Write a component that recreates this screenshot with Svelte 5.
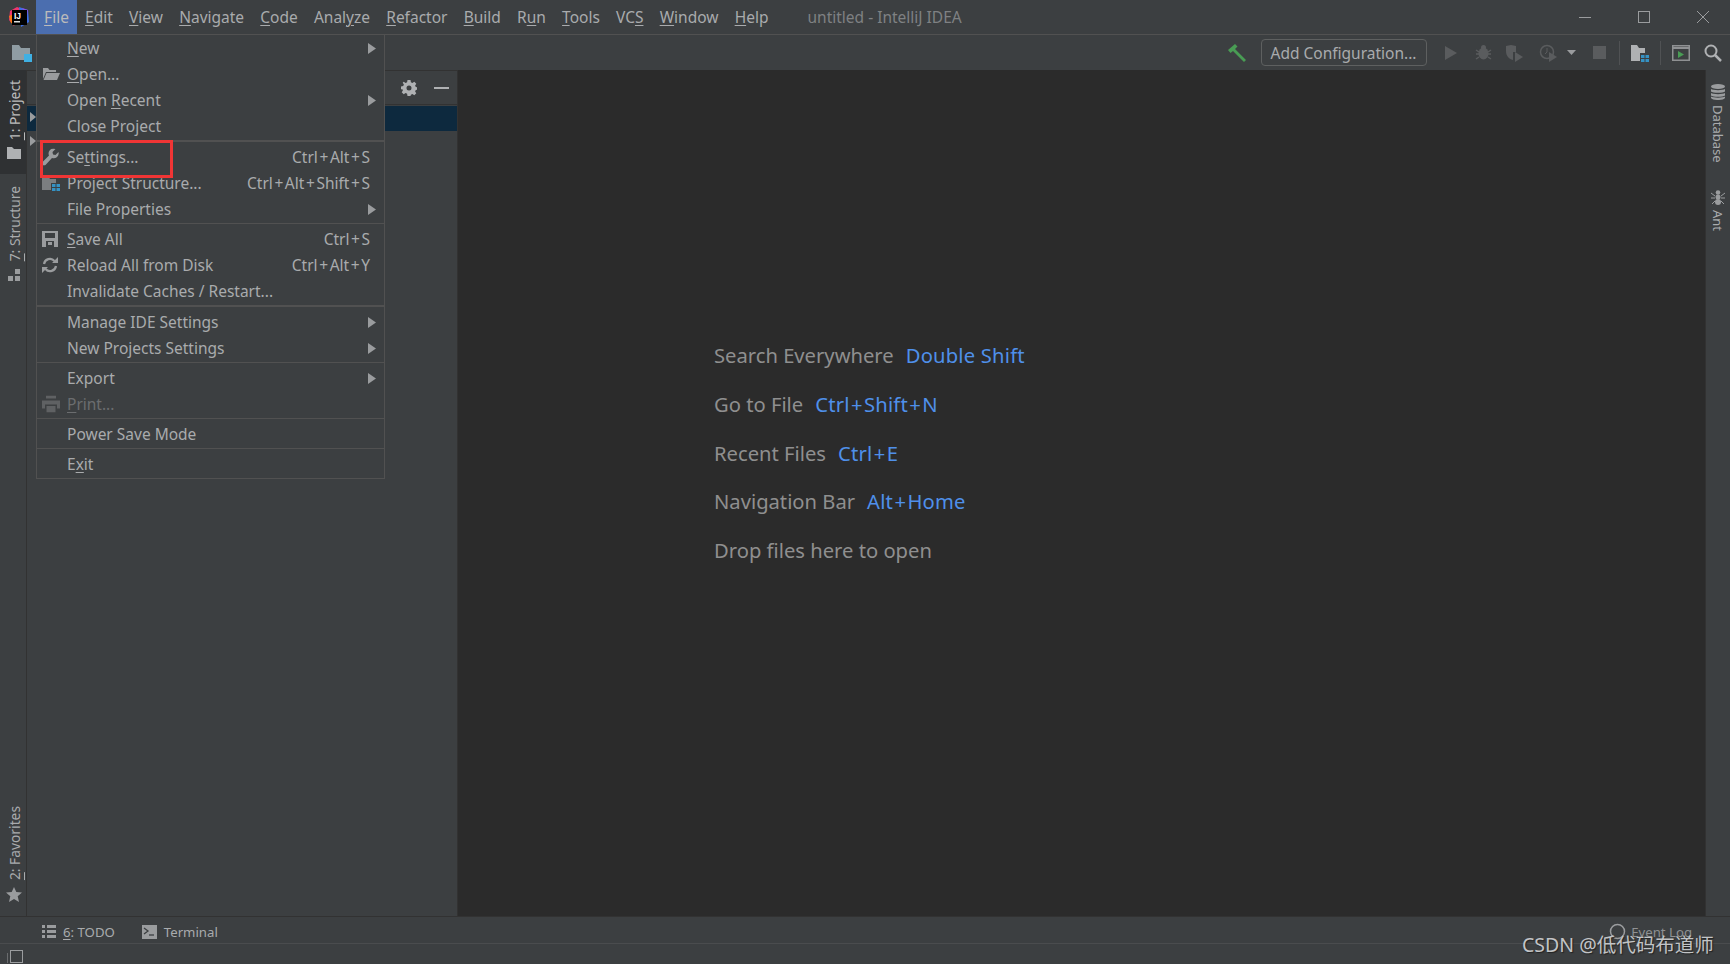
<script lang="ts">
  type Row = { label: string; key?: number; icon?: string; short?: string; sub?: boolean; off?: boolean }

  const bar = [
    ['File', 0], ['Edit', 0], ['View', 0], ['Navigate', 0], ['Code', 0], ['Analyze', 4],
    ['Refactor', 0], ['Build', 0], ['Run', 1], ['Tools', 0], ['VCS', 2], ['Window', 0], ['Help', 0],
  ] as [string, number][]

  const groups: Row[][] = [
    [
      { label: 'New', key: 0, sub: true },
      { label: 'Open...', key: 0, icon: 'open' },
      { label: 'Open Recent', key: 5, sub: true },
      { label: 'Close Project' },
    ],
    [
      { label: 'Settings...', key: 2, icon: 'wrench', short: 'Ctrl+Alt+S' },
      { label: 'Project Structure...', icon: 'structure', short: 'Ctrl+Alt+Shift+S' },
      { label: 'File Properties', sub: true },
    ],
    [
      { label: 'Save All', key: 0, icon: 'save', short: 'Ctrl+S' },
      { label: 'Reload All from Disk', icon: 'reload', short: 'Ctrl+Alt+Y' },
      { label: 'Invalidate Caches / Restart...' },
    ],
    [
      { label: 'Manage IDE Settings', sub: true },
      { label: 'New Projects Settings', sub: true },
    ],
    [
      { label: 'Export', sub: true },
      { label: 'Print...', key: 0, icon: 'print', off: true },
    ],
    [{ label: 'Power Save Mode' }],
    [{ label: 'Exit', key: 1 }],
  ]

  const hints = [
    ['Search Everywhere', 'Double Shift'],
    ['Go to File', 'Ctrl+Shift+N'],
    ['Recent Files', 'Ctrl+E'],
    ['Navigation Bar', 'Alt+Home'],
    ['Drop files here to open', ''],
  ]
</script>

{#snippet mn(text: string, key: number | undefined)}
  {#if key === undefined}{text}{:else}{text.slice(0, key)}<u>{text[key]}</u>{text.slice(key + 1)}{/if}
{/snippet}

{#snippet keys(text: string)}
  {#each text.split('+') as part, i}{#if i > 0}<span class="plus">+</span>{/if}{part}{/each}
{/snippet}

<div class="ide">
  <header class="titlebar">
    <svg class="logo" width="22" height="22" viewBox="0 0 22 22">
      <polygon points="2,5 9,1 14,3 6,20 1,14" fill="#f0366e" />
      <polygon points="1,10 6,8 8,18 3,17" fill="#f97a12" />
      <polygon points="11,1 20,4 21,16 13,21" fill="#3b6ee8" />
      <polygon points="14,2 20,4 19,10" fill="#8a4fe0" />
      <rect x="4" y="4" width="15" height="15" fill="#000" />
      <rect x="6" y="15" width="6" height="1.500" fill="#ddd" />
      <text x="6" y="12.500" class="logo-t">IJ</text>
    </svg>
    <nav class="menubar">
      {#each bar as [name, key], i}
        <span class="top" class:on={i === 0}>{@render mn(name, key)}</span>
      {/each}
    </nav>
    <span class="wintitle">untitled - IntelliJ IDEA</span>
    <div class="winctl">
      <svg width="14" height="14" viewBox="0 0 14 14"><path d="M1 7.500h12" stroke="#9a9c9e" /></svg>
      <svg width="14" height="14" viewBox="0 0 14 14"><rect x="1.500" y="1.500" width="11" height="11" fill="none" stroke="#9a9c9e" /></svg>
      <svg width="14" height="14" viewBox="0 0 14 14"><path d="M1 1l12 12M13 1L1 13" stroke="#9a9c9e" /></svg>
    </div>
  </header>

  <div class="toolbar">
    <svg class="tb-folder" width="22" height="20" viewBox="0 0 22 20">
      <path d="M0 2h7l2 3h9v12H0z" fill="#8f9ca3" />
      <rect x="12" y="11" width="8" height="8" fill="#3fb0e3" />
    </svg>
    <div class="tb-right">
      <svg class="hammer" width="20" height="20" viewBox="0 0 20 20">
        <path d="M1 7 8 1l2.500 2.500L8 6l11 11-2 2L6 8 3.500 10z" fill="#499c54" />
      </svg>
      <button class="config">Add Configuration...</button>
      <svg class="play" width="14" height="16" viewBox="0 0 14 16"><path d="M1 1l12 7-12 7z" fill="#5a5c5e" /></svg>
      <svg class="bug" width="17" height="17" viewBox="0 0 17 17">
        <ellipse cx="8.500" cy="9.500" rx="5" ry="6" fill="#5a5c5e" />
        <circle cx="8.500" cy="3.500" r="2.500" fill="#5a5c5e" />
        <path d="M1 6l3 2M16 6l-3 2M1 10h3M16 10h-3M1 15l3-2M16 15l-3-2" stroke="#5a5c5e" stroke-width="1.500" />
      </svg>
      <svg class="cov" width="20" height="18" viewBox="0 0 20 18">
        <path d="M1 2l5-1 5 1v6H8v8C4 15 1 12 1 7z" fill="#5a5c5e" />
        <path d="M10 8l8 5-8 5z" fill="#5a5c5e" />
      </svg>
      <span class="profile">
        <svg width="20" height="18" viewBox="0 0 20 18">
          <circle cx="8" cy="8" r="6.500" fill="none" stroke="#5a5c5e" stroke-width="1.500" />
          <path d="M8 4v4l-2 2" stroke="#5a5c5e" fill="none" />
          <path d="M10 8l8 5-8 5z" fill="#5a5c5e" />
        </svg>
        <svg width="9" height="6" viewBox="0 0 9 6"><path d="M0 0h9L4.500 5z" fill="#9a9c9e" /></svg>
      </span>
      <svg class="stop" width="13" height="13" viewBox="0 0 13 13"><rect width="13" height="13" fill="#5a5c5e" /></svg>
      <i class="vsep"></i>
      <svg width="18" height="18" viewBox="0 0 18 18">
        <path d="M0 1h6l2 3h6v5H9v8H0z" fill="#afb1b3" />
        <path d="M10 11h3.500v3H10zM14.500 11H18v3h-3.500zM10 15h3.500v3H10zM14.500 15H18v3h-3.500z" fill="#3592c4" />
      </svg>
      <i class="vsep"></i>
      <svg width="18" height="16" viewBox="0 0 18 16">
        <rect x=".75" y=".75" width="16.500" height="14.500" fill="none" stroke="#8f9193" stroke-width="1.500" />
        <path d="M1 3h16" stroke="#8f9193" stroke-width="2" />
        <path d="M6 6l6 3.500-6 3.500z" fill="#499c54" />
      </svg>
      <svg width="18" height="18" viewBox="0 0 18 18">
        <circle cx="7" cy="7" r="5.500" fill="none" stroke="#afb1b3" stroke-width="2" />
        <path d="M11 11l6 6" stroke="#afb1b3" stroke-width="2.500" />
      </svg>
    </div>
  </div>

  <div class="middle">
    <aside class="stripe left">
      <div class="side-top">
        <div class="tab active">
          <span class="vtext"><u>1</u>: Project</span>
          <svg width="14" height="12" viewBox="0 0 14 12"><path d="M0 0h5l2 2h7v10H0z" fill="#afb1b3" /></svg>
        </div>
        <div class="tab">
          <span class="vtext"><u>7</u>: Structure</span>
          <svg width="13" height="13" viewBox="0 0 13 13"><path d="M7 0h5v5H7zM0 7h5v5H0zM7 7h5v5H7z" fill="#9a9c9e" /></svg>
        </div>
      </div>
      <div class="tab fav">
        <span class="vtext"><u>2</u>: Favorites</span>
        <svg width="16" height="15" viewBox="0 0 16 15"><path d="M8 0l2.300 5 5.700.600-4.300 3.700L13 15 8 12l-5 3 1.300-5.700L0 5.600 5.700 5z" fill="#9a9c9e" /></svg>
      </div>
    </aside>

    <section class="panel">
      <div class="panel-head">
        <svg width="16" height="16" viewBox="0 0 16 16">
          <path fill-rule="evenodd" d="M6.500 0h3l.4 2.200 1.500.7L13.300 1.700l2 2-1.200 1.900.7 1.500L17 7.500v-1 3l-2.200.4-.7 1.500 1.200 1.900-2 2-1.900-1.200-1.500.7L9.500 16h-3l-.4-2.200-1.500-.7-1.900 1.200-2-2 1.200-1.900-.7-1.500L0 9.500v-3l2.200-.4.7-1.500L1.700 2.700l1-1 1.900 1.200 1.500-.7zM8 5.500a2.500 2.500 0 1 0 0 5 2.500 2.500 0 0 0 0-5z" fill="#afb1b3" />
        </svg>
        <span class="dash"></span>
      </div>
      <div class="selrow"></div>
    </section>

    <main class="editor">
      <div class="hints">
        {#each hints as [a, b]}
          <p>{a}{#if b}<b>{@render keys(b)}</b>{/if}</p>
        {/each}
      </div>
    </main>

    <aside class="stripe right">
      <div class="rtab">
        <svg width="14" height="16" viewBox="0 0 14 16">
          <ellipse cx="7" cy="2.500" rx="7" ry="2.500" fill="#9a9c9e" />
          <path d="M0 5c1.500 1.500 12.500 1.500 14 0v2.500c-1.500 1.800-12.500 1.800-14 0zM0 9c1.500 1.500 12.500 1.500 14 0v2.500c-1.500 1.800-12.500 1.800-14 0zM0 12.500c1.500 1.500 12.500 1.500 14 0V14c-1.500 2.700-12.500 2.700-14 0z" fill="#9a9c9e" />
        </svg>
        <span class="rtext">Database</span>
      </div>
      <div class="rtab">
        <svg width="14" height="15" viewBox="0 0 14 15">
          <circle cx="7" cy="2.500" r="2.300" fill="#9a9c9e" />
          <ellipse cx="7" cy="7" rx="2.500" ry="2.500" fill="#9a9c9e" />
          <ellipse cx="7" cy="12" rx="3" ry="3" fill="#9a9c9e" />
          <path d="M0 3l4 3M14 3l-4 3M0 8h4M14 8h-4M1 14l3-3M13 14l-3-3" stroke="#9a9c9e" />
        </svg>
        <span class="rtext">Ant</span>
      </div>
    </aside>
  </div>

  <div class="toolwin">
    <span class="tw">
      <svg width="14" height="13" viewBox="0 0 14 13"><path d="M0 0h3v3H0zM5 0h9v3H5zM0 5h3v3H0zM5 5h9v3H5zM0 10h3v3H0zM5 10h9v3H5z" fill="#9a9c9e" /></svg>
      <span><u>6</u>: TODO</span>
    </span>
    <span class="tw">
      <svg width="15" height="14" viewBox="0 0 15 14"><rect width="15" height="14" fill="#9a9c9e" /><path d="M2 3l4 3-4 3" stroke="#3c3f41" fill="none" stroke-width="1.300" /><path d="M7 10h5" stroke="#3c3f41" stroke-width="1.300" /></svg>
      <span>Terminal</span>
    </span>
    <span class="evlog">
      <svg width="17" height="17" viewBox="0 0 17 17"><circle cx="8.500" cy="8.500" r="7" fill="none" stroke="#9a9c9e" stroke-width="1.500" /></svg>
      <span>Event Log</span>
    </span>
  </div>

  <footer class="status">
    <svg width="16" height="14" viewBox="0 0 16 14">
      <rect x="3.500" y="1.500" width="12" height="12" fill="none" stroke="#9a9c9e" />
      <path d="M.5 4v10" stroke="#6a6c6e" />
    </svg>
  </footer>

  <div class="filemenu">
    {#each groups as rows, g}
      {#if g > 0}<hr class:thick={g === 1 || g === 3} />{/if}
      {#each rows as row}
        <div class="item" class:off={row.off}>
          <span class="ico">
            {#if row.icon === 'open'}
              <svg width="18" height="14" viewBox="0 0 18 14"><path d="M1 1h5l1.500 2H14v2H4L1 12z" fill="#9a9c9e" /><path d="M4.500 6H18l-3 7H1.500z" fill="#9a9c9e" /></svg>
            {:else if row.icon === 'wrench'}
              <svg width="17" height="17" viewBox="0 0 17 17"><path d="M11.500 0a5 5 0 0 1 2 .4L10.500 3.500l.5 2.500 2.500.5 3-3A5 5 0 0 1 10 9.500L3.500 16.500a1.500 1.500 0 0 1-3-3L7 7a5 5 0 0 1 4.500-7z" fill="#9a9c9e" /></svg>
            {:else if row.icon === 'structure'}
              <svg width="18" height="16" viewBox="0 0 18 16"><path d="M0 1h6l2 3h6v4H9v7H0z" fill="#7b7e80" /><path d="M10 9h3.500v3H10zM14.500 9H18v3h-3.500zM10 13h3.500v3H10zM14.500 13H18v3h-3.500z" fill="#3592c4" /></svg>
            {:else if row.icon === 'save'}
              <svg width="16" height="16" viewBox="0 0 16 16"><path fill-rule="evenodd" d="M0 0h16v16H0zM3 2v5h10V2zM4 10v6h8v-6z" fill="#9a9c9e" /><rect x="6" y="11" width="4" height="3" fill="#9a9c9e" /></svg>
            {:else if row.icon === 'reload'}
              <svg width="16" height="16" viewBox="0 0 16 16"><path d="M2 7a6 6 0 0 1 10.500-3M14 9a6 6 0 0 1-10.500 3" fill="none" stroke="#9a9c9e" stroke-width="2.200" /><path d="M10 6h6V0zM6 10H0v6z" fill="#9a9c9e" /></svg>
            {:else if row.icon === 'print'}
              <svg width="18" height="17" viewBox="0 0 18 17"><path d="M4 0h10v3H4zM0 5h18v8h-3V9H3v4H0zM4.500 10.500h9V17h-9z" fill="#5f6163" /></svg>
            {/if}
          </span>
          <span class="lbl">{@render mn(row.label, row.key)}</span>
          {#if row.short}<span class="short">{@render keys(row.short)}</span>{/if}
          {#if row.sub}<svg class="arrow" width="9" height="11" viewBox="0 0 9 11"><path d="M1 0l8 5.500L1 11z" fill="#9a9c9e" /></svg>{/if}
        </div>
      {/each}
    {/each}
  </div>

  <div class="tree-arrows"><i></i><i></i></div>
  <div class="redbox"></div>
  <div class="watermark">CSDN @低代码布道师</div>
</div>

<style>
  :global(body) { margin: 0; background: #3c3f41; }
  .ide {
    position: relative;
    width: 1730px;
    height: 964px;
    overflow: hidden;
    display: grid;
    grid-template-rows: 35px 35px 1fr 28px 20px;
    background: #3c3f41;
    color: #a9abad;
    font-family: "Noto Sans", "Open Sans", sans-serif;
    font-size: 15.5px;
  }
  u { text-underline-offset: 2px; text-decoration-thickness: 1px; }
  svg { display: block; flex-shrink: 0; }

  .titlebar {
    display: flex;
    align-items: center;
    border-bottom: 1px solid #515151;
    box-sizing: border-box;
  }
  .logo { margin-left: 8px; margin-right: 6px; }
  .logo-t { font: 700 8.5px "Liberation Sans", sans-serif; fill: #fff; }
  .menubar { display: flex; height: 100%; }
  .top { padding: 0 8.1px; line-height: 34px; }
  .top.on { background: #4b6eaf; color: #bbb; }
  .wintitle { margin-left: 31px; color: #7f8183; }
  .winctl { margin-left: auto; display: flex; gap: 45px; margin-right: 20px; }

  .toolbar {
    display: flex;
    align-items: center;
    justify-content: space-between;
    padding: 0 8px 0 12px;
  }
  .tb-right { display: flex; align-items: center; gap: 14px; }
  .config {
    width: 166px;
    height: 27px;
    padding: 0;
    background: transparent;
    border: 1px solid #5e6060;
    border-radius: 4px;
    color: #a9abad;
    font: inherit;
  }
  .play { margin-left: 3px; }
  .bug { margin-left: 3px; }
  .cov { margin-left: -.5px; }
  .stop { margin-left: 3px; margin-right: 2.500px; }
  .profile { display: flex; align-items: center; gap: 7.500px; }
  .vsep { width: 1px; height: 24px; background: #505254; margin: 0 -3px; }

  .middle { display: grid; grid-template-columns: 27px 431px 1fr 25px; min-height: 0; }
  .stripe { display: flex; flex-direction: column; }
  .stripe.left {
    justify-content: space-between;
    border-right: 1px solid #323232;
    box-sizing: border-box;
  }
  .tab {
    display: flex;
    flex-direction: column;
    align-items: center;
    gap: 7px;
    padding: 10px 0 8px 2px;
  }
  .tab.active { background: #2f3133; padding-bottom: 15px; margin-bottom: 2px; }
  .tab.fav { padding-bottom: 14px; }
  .vtext {
    writing-mode: vertical-rl;
    transform: rotate(180deg);
    font-size: 13.800px;
  }
  .active .vtext { color: #bbb; }

  .panel { border-right: 1px solid #323232; }
  .panel-head {
    height: 35px;
    box-sizing: border-box;
    display: flex;
    align-items: center;
    justify-content: flex-end;
    gap: 17px;
    padding-right: 8px;
    border-bottom: 1px solid #323232;
    border-top: 1px solid #323232;
  }
  .dash { width: 15px; height: 2px; background: #afb1b3; }
  .selrow { height: 25px; margin-top: 1px; background: #0d293e; }

  .editor {
    background: #2b2b2b;
    display: flex;
    padding: 271px 0 0 256px;
    box-sizing: border-box;
  }
  .hints p {
    margin: 0 0 20.800px;
    height: 28px;
    line-height: 28px;
    font-size: 20.200px;
    color: #8f8f8f;
    white-space: nowrap;
  }
  .hints b { font-weight: 400; color: #4f90ea; margin-left: 12px; letter-spacing: .2px; }
  .hints .plus { margin: 0 1.300px; }
  .short .plus { margin: 0 1.600px; }

  .stripe.right {
    align-items: center;
    gap: 27px;
    padding-top: 14px;
    border-left: 1px solid #323232;
    box-sizing: border-box;
  }
  .rtab { display: flex; flex-direction: column; align-items: center; gap: 5px; }
  .rtext { writing-mode: vertical-rl; font-size: 13px; }

  .toolwin {
    display: flex;
    align-items: center;
    gap: 27px;
    padding: 3px 0 0 42px;
    font-size: 13.200px;
    border-top: 1px solid #323232;
    border-bottom: 1px solid #4a4c4e;
    box-sizing: border-box;
  }
  .tw { display: flex; align-items: center; gap: 7px; }
  .evlog { margin-left: auto; margin-right: 38px; display: flex; align-items: center; gap: 5px; color: #8f9193; }

  .status { padding: 5px 0 0 7px; }

  .filemenu {
    position: absolute;
    left: 36px;
    top: 34px;
    width: 349px;
    box-sizing: border-box;
    background: #3c3f41;
    border: 1px solid #515151;
    padding-bottom: 1px;
  }
  hr {
    margin: 1px 0 2px;
    height: 1px;
    border: 0;
    background: #515151;
  }
  hr.thick { height: 2px; }
  .item {
    position: relative;
    display: flex;
    align-items: center;
    height: 26px;
    padding: 0 14px 0 30px;
    white-space: nowrap;
  }
  .item.off { color: #6b6d6f; }
  .ico { position: absolute; left: 5px; top: 50%; transform: translateY(-50%); }
  .short { margin-left: auto; }
  .arrow { margin-left: auto; margin-right: -6px; }

  .tree-arrows {
    position: absolute;
    left: 30px;
    top: 112px;
    display: flex;
    flex-direction: column;
    gap: 14px;
  }
  .tree-arrows i {
    display: block;
    width: 0;
    height: 0;
    border-left: 6px solid #9a9c9e;
    border-top: 5.500px solid transparent;
    border-bottom: 5.500px solid transparent;
  }
  .redbox {
    position: absolute;
    left: 40px;
    top: 140px;
    width: 133px;
    height: 38px;
    box-sizing: border-box;
    border: 3px solid #f03535;
  }
  .watermark {
    position: absolute;
    left: 1522px;
    top: 929px;
    font: 19.500px "Noto Sans", "Noto Sans CJK SC", sans-serif;
    color: #c2c4c6;
    text-shadow: 1px 1px 1px #222;
    white-space: nowrap;
  }
</style>
